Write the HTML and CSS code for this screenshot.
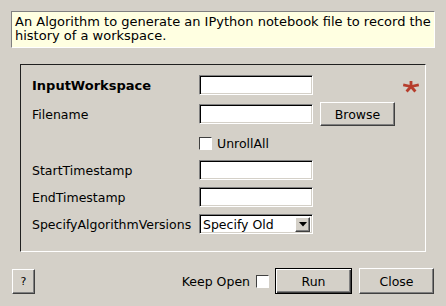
FILE: index.html
```html
<!DOCTYPE html>
<html>
<head>
<meta charset="utf-8">
<link rel="stylesheet" href="styles.css">
</head>
<body>
<div class="dialog">
  <div class="desc">An Algorithm to generate an IPython notebook file to record the<br>history of a workspace.</div>
  <div class="group">
    <div class="row">
      <span class="label bold">InputWorkspace</span>
      <span class="field"></span>
      <svg class="star" width="18" height="13" viewBox="-9 -6.5 18 13">
        <g stroke="#b63d2c" stroke-width="2.8" fill="none">
          <line x1="0" y1="0.5" x2="0" y2="-5.5"/>
          <line x1="0" y1="0" x2="-7.8" y2="-1.6"/>
          <line x1="0" y1="0" x2="7.8" y2="-1.6"/>
          <line x1="0" y1="0" x2="-4.4" y2="5"/>
          <line x1="0" y1="0" x2="4.4" y2="5"/>
        </g>
      </svg>
    </div>
    <div class="row tall">
      <span class="label">Filename</span>
      <span class="field"></span>
      <span class="btn browse">Browse</span>
    </div>
    <div class="row">
      <span class="label"></span>
      <span class="check"></span>
      <span class="checktext">UnrollAll</span>
    </div>
    <div class="row">
      <span class="label">StartTimestamp</span>
      <span class="field"></span>
    </div>
    <div class="row">
      <span class="label">EndTimestamp</span>
      <span class="field"></span>
    </div>
    <div class="row">
      <span class="label">SpecifyAlgorithmVersions</span>
      <span class="field select"><span class="seltext">Specify Old</span><span class="arrow"><svg width="8" height="5" viewBox="0 0 8 5"><polygon points="0,0 8,0 4,4.5" fill="#000"/></svg></span></span>
    </div>
  </div>
  <div class="footer">
    <span class="btn help">?</span>
    <span class="keep">Keep Open</span>
    <span class="check keepcheck"></span>
    <span class="btn run">Run</span>
    <span class="btn close">Close</span>
  </div>
</div>
</body>
</html>
```

FILE: styles.css
```css
html, body {
  margin: 0;
  padding: 0;
  background: #d4d0c8;
}
body {
  width: 446px;
  height: 306px;
  overflow: hidden;
  font-family: "DejaVu Sans", "Liberation Sans", sans-serif;
  font-size: 13px;
  color: #000;
}
.dialog {
  padding: 11px 11px 0 11px;
}
.desc {
  box-sizing: border-box;
  width: 424px;
  height: 37px;
  background: #ffffe1;
  border-top: 1px solid #808080;
  border-left: 1px solid #808080;
  border-right: 1px solid #ffffff;
  border-bottom: 1px solid #ffffff;
  padding: 3px 0 0 3px;
  line-height: 14px;
  white-space: nowrap;
}
.group {
  box-sizing: border-box;
  margin: 16px 0 0 9px;
  width: 406px;
  height: 188px;
  border-top: 1px solid #202020;
  border-left: 1px solid #202020;
  border-right: 1px solid #ffffff;
  border-bottom: 1px solid #ffffff;
  padding: 10px 5px 0 11px;
  display: flex;
  flex-direction: column;
  gap: 7px;
  font-size: 12.5px;
}
.row {
  display: flex;
  align-items: center;
  height: 20px;
}
.row.tall {
  height: 24px;
}
.label {
  width: 167px;
  flex: none;
  white-space: nowrap;
}
.bold {
  font-weight: bold;
  font-size: 13px;
}
.field {
  box-sizing: border-box;
  width: 114px;
  height: 20px;
  background: #fff;
  border-top: 1px solid #808080;
  border-left: 1px solid #808080;
  border-right: 1px solid #ffffff;
  border-bottom: 1px solid #ffffff;
  box-shadow: inset 1px 1px 0 #000, inset -1px -1px 0 #d4d0c8;
  flex: none;
}
.star {
  margin-left: auto;
  margin-top: 2px;
  display: block;
}
.btn {
  box-sizing: border-box;
  display: flex;
  align-items: center;
  justify-content: center;
  background: #d4d0c8;
  border-top: 1px solid #ffffff;
  border-left: 1px solid #ffffff;
  border-right: 1px solid #404040;
  border-bottom: 1px solid #404040;
  box-shadow: inset -1px -1px 0 #808080;
  flex: none;
}
.browse {
  margin-left: 7px;
  width: 75px;
  height: 24px;
}
.check {
  box-sizing: border-box;
  width: 13px;
  height: 13px;
  background: #fff;
  border-top: 1px solid #404040;
  border-left: 1px solid #404040;
  border-right: 1px solid #ffffff;
  border-bottom: 1px solid #ffffff;
  flex: none;
}
.checktext {
  margin-left: 5px;
}
.select {
  position: relative;
  display: flex;
  align-items: center;
}
.seltext {
  padding-left: 3px;
}
.arrow {
  box-sizing: border-box;
  position: absolute;
  right: 2px;
  top: 2px;
  width: 15px;
  height: 15px;
  background: #d4d0c8;
  border-top: 1px solid #ffffff;
  border-left: 1px solid #ffffff;
  border-right: 1px solid #404040;
  border-bottom: 1px solid #404040;
  box-shadow: inset -1px -1px 0 #808080;
  display: flex;
  align-items: center;
  justify-content: center;
}
.arrow svg {
  display: block;
}
.footer {
  display: flex;
  align-items: center;
  margin: 16px 1px 0 1px;
  height: 26px;
  font-size: 12.5px;
}
.help {
  width: 23px;
  height: 25px;
  font-size: 11px;
}
.keep {
  margin-left: auto;
  margin-right: 6px;
}
.keepcheck {
  margin-right: 6px;
}
.run {
  width: 77px;
  height: 26px;
  border: 1px solid #000;
  box-shadow: inset 1px 1px 0 #ffffff, inset -1px -1px 0 #404040, inset -2px -2px 0 #808080;
}
.close {
  margin-left: 7px;
  width: 75px;
  height: 26px;
}
```
